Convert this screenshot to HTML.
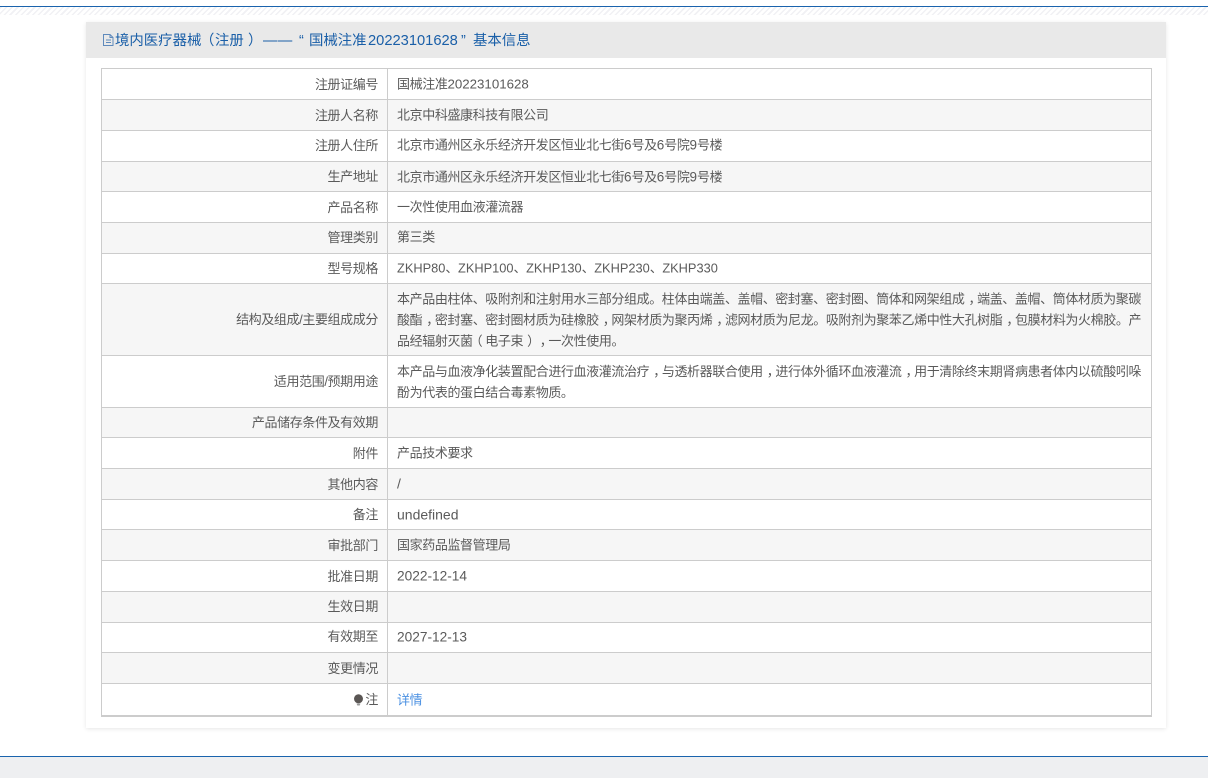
<!DOCTYPE html>
<html lang="zh"><head><meta charset="utf-8"><title>基本信息</title>
<style>
*{box-sizing:border-box}
html,body{margin:0;padding:0;width:1208px;height:778px;overflow:hidden;background:#fff}
body{font:13px/21px "Liberation Sans","Noto Sans CJK SC",sans-serif;color:#5a5a5a;position:relative;letter-spacing:-.39px;text-spacing-trim:space-all}
.abs{position:absolute}
.hatch{left:0;top:7px;width:1208px;height:8px;background:repeating-linear-gradient(135deg,#f1f1f4 0,#f1f1f4 1.5px,#fff 1.5px,#fff 4px)}
.topline{left:0;top:6px;width:1208px;height:1px;background:#1a63ad}
.panel{left:86px;top:22px;width:1080px;height:706px;background:#fff;box-shadow:0 1px 4px rgba(0,0,0,.1)}
.head{left:86px;top:22px;width:1080px;height:36px;background:#e9e9e9}
.t{position:absolute;top:23px;height:36px;line-height:36px;color:#1a5fa8;font-size:14.4px;letter-spacing:0;white-space:nowrap}
.t.n{font-size:14.7px}
.r{position:absolute;left:101px;width:1051px;border:1px solid #ccc;border-bottom:0}
.r.alt{background:#f6f6f6}
.r.last{border-bottom:2px solid #ccc}
.l{position:absolute;left:0;top:0;bottom:0;width:286px;border-right:1px solid #ccc;display:flex;align-items:center;justify-content:flex-end;padding-right:9px;white-space:nowrap}
.v{position:absolute;left:295px;right:0;top:50%;transform:translateY(-50%);white-space:nowrap}
.up .l{padding-bottom:2px}
.up .v{margin-top:-1px}
.n{letter-spacing:0;font-size:13.5px}
.d{letter-spacing:0;font-size:13.3px}
.w{letter-spacing:0;font-size:14px}
.z{letter-spacing:0;font-size:12.8px}
i{font-style:normal;position:relative}
.c{left:4px}
.o{left:-3px}
.e{left:4px}
a{color:#4a90e2;text-decoration:none}
.footline{left:0;top:756px;width:1208px;height:1px;background:#1a63ad}
.foot{left:0;top:757px;width:1208px;height:21px;background:#eeeff1}
.bulb{margin-right:1px}
</style></head>
<body>
<div class="abs topline"></div>
<div class="abs hatch"></div>
<div class="abs panel"></div>
<div class="abs head"></div>
<svg class="abs" style="left:102px;top:33px" width="13" height="14" viewBox="0 0 13 14" fill="none" stroke="#5f8abc" stroke-width="1"><path d="M1.500 1.500h6.500l3 3v8h-9.500zM8 1.500v3h3M4 7h5M4 9.500h5"/></svg>
<span class="t" style="left:115px">境内医疗器械</span>
<span class="t" style="left:200px">（</span>
<span class="t" style="left:215px">注册</span>
<span class="t" style="left:248px">）</span>
<span class="t" style="left:263px;letter-spacing:.5px">——</span>
<span class="t" style="left:299px">“</span>
<span class="t" style="left:309px">国械注准</span>
<span class="t n" style="left:368px">20223101628</span>
<span class="t" style="left:461px">”</span>
<span class="t" style="left:473px">基本信息</span>

<div class="r" style="top:68px;height:31px"><div class="l">注册证编号</div><div class="v">国械注准<span class="d">20223101628</span></div></div>
<div class="r alt" style="top:99px;height:31px"><div class="l">注册人名称</div><div class="v">北京中科盛康科技有限公司</div></div>
<div class="r up" style="top:130px;height:31px"><div class="l">注册人住所</div><div class="v">北京市通州区永乐经济开发区恒业北七街<span class="n">6</span>号及<span class="n">6</span>号院<span class="n">9</span>号楼</div></div>
<div class="r alt" style="top:161px;height:30px"><div class="l">生产地址</div><div class="v">北京市通州区永乐经济开发区恒业北七街<span class="n">6</span>号及<span class="n">6</span>号院<span class="n">9</span>号楼</div></div>
<div class="r" style="top:191px;height:31px"><div class="l">产品名称</div><div class="v">一次性使用血液灌流器</div></div>
<div class="r alt up" style="top:222px;height:31px"><div class="l">管理类别</div><div class="v">第三类</div></div>
<div class="r" style="top:253px;height:30px"><div class="l">型号规格</div><div class="v" style="margin-top:-1px"><span class="z">ZKHP80</span>、<span class="z">ZKHP100</span>、<span class="z">ZKHP130</span>、<span class="z">ZKHP230</span>、<span class="z">ZKHP330</span></div></div>
<div class="r alt" style="top:283px;height:72px"><div class="l">结构及组成/主要组成成分</div><div class="v">本产品由柱体、吸附剂和注射用水三部分组成。柱体由端盖、盖帽、密封塞、密封圈、筒体和网架组成<i class="c">，</i>端盖、盖帽、筒体材质为聚碳<br>酸酯<i class="c">，</i>密封塞、密封圈材质为硅橡胶<i class="c">，</i>网架材质为聚丙烯<i class="c">，</i>滤网材质为尼龙。吸附剂为聚苯乙烯中性大孔树脂<i class="c">，</i>包膜材料为火棉胶。产<br>品经辐射灭菌<i class="o">（</i>电子束<i class="e">）</i><i class="c">，</i>一次性使用。</div></div>
<div class="r" style="top:355px;height:52px"><div class="l">适用范围/预期用途</div><div class="v">本产品与血液净化装置配合进行血液灌流治疗<i class="c">，</i>与透析器联合使用<i class="c">，</i>进行体外循环血液灌流<i class="c">，</i>用于清除终末期肾病患者体内以硫酸吲哚<br>酚为代表的蛋白结合毒素物质。</div></div>
<div class="r alt" style="top:407px;height:30px"><div class="l">产品储存条件及有效期</div></div>
<div class="r" style="top:437px;height:31px"><div class="l">附件</div><div class="v">产品技术要求</div></div>
<div class="r alt" style="top:468px;height:31px"><div class="l">其他内容</div><div class="v"><span class="w">/</span></div></div>
<div class="r" style="top:499px;height:30px"><div class="l">备注</div><div class="v"><span class="w">undefined</span></div></div>
<div class="r alt" style="top:529px;height:31px"><div class="l">审批部门</div><div class="v">国家药品监督管理局</div></div>
<div class="r" style="top:560px;height:31px"><div class="l">批准日期</div><div class="v"><span class="w" style="font-size:13.7px">2022-12-14</span></div></div>
<div class="r alt up" style="top:591px;height:31px"><div class="l">生效日期</div></div>
<div class="r up" style="top:622px;height:30px"><div class="l">有效期至</div><div class="v"><span class="w" style="font-size:13.7px">2027-12-13</span></div></div>
<div class="r alt" style="top:652px;height:31px"><div class="l">变更情况</div></div>
<div class="r last" style="top:683px;height:34px"><div class="l"><svg class="bulb" width="11" height="12" viewBox="0 0 11 12"><circle cx="5.500" cy="4.800" r="4.500" fill="#5a5654"/><path d="M3.500 9.500h4l-.8 2h-2.400z" fill="#9a9a9a"/></svg>注</div><div class="v"><a href="#">详情</a></div></div>

<div class="abs footline"></div>
<div class="abs foot"></div>
</body></html>
